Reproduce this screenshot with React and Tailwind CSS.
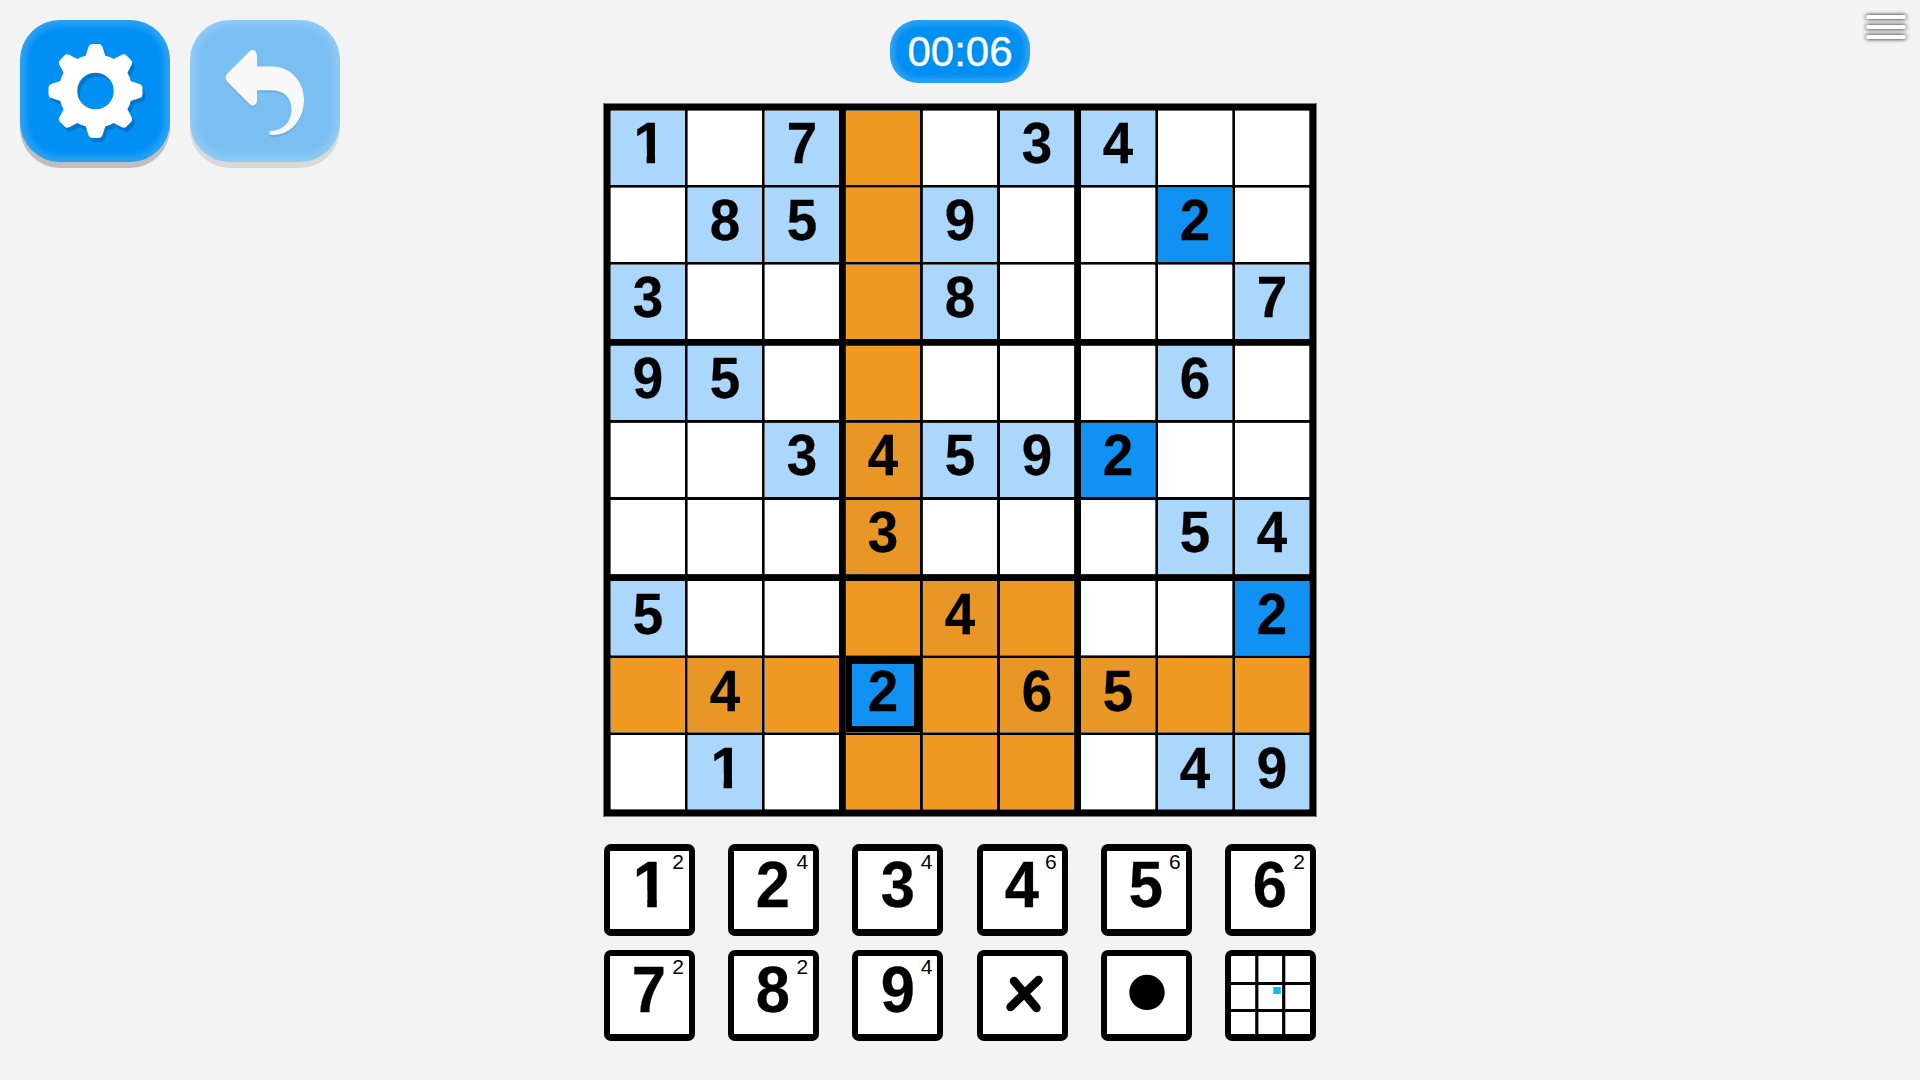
const ROWS = [
  '1.7..34..',
  '.85.9..2.',
  '3...8...7',
  '95.....6.',
  '..34592..',
  '...3...54',
  '5...4...2',
  '.4.2.65..',
  '.1.....49',
];

const SEL_ROW = 7;
const SEL_COL = 3;

// Hairlines beside each cell, one per column and per row.
const EDGE_X = [
  'shadow-[-1px_0_0_#666]',
  'shadow-[-1px_0_0_#666]',
  'shadow-[-1px_0_0_#666]',
  'shadow-[-1px_0_0_#222]',
  'shadow-[-1px_0_0_#222]',
  'shadow-[1px_0_0_#222]',
  'shadow-[1px_0_0_#555]',
  'shadow-[1px_0_0_#555]',
  'shadow-[1px_0_0_#555]',
];
const EDGE_Y = [
  'shadow-[0_-1px_0_#666]',
  'shadow-[0_-1px_0_#666]',
  'shadow-[0_-1px_0_#666]',
  'shadow-[0_-1px_0_#333]',
  'shadow-[0_-1px_0_#222]',
  'shadow-[0_1px_0_#222]',
  'shadow-[0_1px_0_#666]',
  'shadow-[0_1px_0_#666]',
  'shadow-[0_1px_0_#666]',
];

function cellColor(r, c, v) {
  if (v === '2') return 'bg-[#1192f2]';
  const lit =
    r === SEL_ROW ||
    c === SEL_COL ||
    (Math.floor(r / 3) === 2 && Math.floor(c / 3) === 1);
  if (lit) return v === '.' ? 'bg-[#f09a24]' : 'bg-[#e89626]';
  return v === '.' ? 'bg-white' : 'bg-[#acd7fd]';
}

// Slightly condensed bold digit; the "1" is trimmed to a footless stem.
function Digit({ value, className }) {
  const shape =
    value === '1'
      ? 'translate-x-[1.500px] [-webkit-text-stroke:0.6px_black] [clip-path:polygon(0_0,67.6%_0,67.6%_100%,41%_100%,41%_58%,0_58%)]'
      : 'scale-x-[0.96] [-webkit-text-stroke:0.3px_black]';
  return <span className={`inline-block font-bold ${shape} ${className}`}>{value}</span>;
}

function Cell({ r, c }) {
  const v = ROWS[r][c];
  const selected = r === SEL_ROW && c === SEL_COL;
  return (
    <div className={`size-[74px] ${EDGE_X[c]}`}>
      <div
        className={`flex size-full items-start justify-center ${EDGE_Y[r]} ${cellColor(r, c, v)} ${
          selected ? 'border-[6px] border-black' : ''
        }`}
      >
        {v !== '.' && (
          <Digit
            value={v}
            className={`text-[57px] ${r > 5 ? 'leading-[67px]' : 'leading-[65px]'} ${
              selected ? '-mt-[6px]' : ''
            }`}
          />
        )}
      </div>
    </div>
  );
}

function Board() {
  const idx = [0, 1, 2];
  return (
    <div className="grid w-[714px] grid-cols-3 gap-[7px] border border-[#777] bg-black p-[7px]">
      {idx.map((br) =>
        idx.map((bc) => (
          <div key={`${br}${bc}`} className="grid grid-cols-3 gap-[3px]">
            {idx.map((r) => idx.map((c) => <Cell key={`${r}${c}`} r={br * 3 + r} c={bc * 3 + c} />))}
          </div>
        )),
      )}
    </div>
  );
}

function Key({ label, count, tall, children }) {
  return (
    <button
      className={`relative flex w-[91px] items-start justify-center rounded-[7px] border-[6px] border-b-[7px] border-black bg-white ${
        tall ? 'h-[92px] border-t-[7px]' : 'h-[91px]'
      }`}
    >
      {label && <Digit value={label} className="-ml-[1px] text-[64px] leading-[68px]" />}
      {count && <span className="absolute top-0 right-[5px] text-[21px] leading-[22px]">{count}</span>}
      {children}
    </button>
  );
}

const KEYS = [
  ['1', '2'], ['2', '4'], ['3', '4'], ['4', '6'], ['5', '6'], ['6', '2'],
  ['7', '2'], ['8', '2'], ['9', '4'],
];

const TEETH = [0, 45, 90, 135, 180, 225, 270, 315];

function GearShape({ color }) {
  return (
    <g fill={color} stroke={color}>
      <circle r="27.5" fill="none" strokeWidth="18.5" />
      {TEETH.map((a) => (
        <path
          key={a}
          transform={`rotate(${a})`}
          d="M-9.5 -33 L-6 -44 Q-5.2 -46 -3.5 -46 L3.5 -46 Q5.2 -46 6 -44 L9.5 -33 Z"
          strokeWidth="2"
          strokeLinejoin="round"
        />
      ))}
    </g>
  );
}

const ARROW =
  'M26.5 53.5 L49 31 Q51.5 28.5 54.5 31.5 Q56 33 56 36 L56 46.5 L71 46.5 C90 46.5 103 62 103 80 C103 99 90 115 72 115 L70 115 Q68 114.500 68 113 Q68 111 70 111 C82 110.500 90.500 102 90.500 90 C90.500 78 83 70.300 70 70.300 L56 70.300 L56 80 Q56 84 53 85.500 Q51 86.500 49 84.500 L26.5 62 Q23 58 26.5 53.5 Z';

export default function App() {
  return (
    <div className="flex h-[1080px] w-[1920px] justify-between overflow-hidden bg-[#f3f3f3] font-['Liberation_Sans',Arial,sans-serif] text-black">
      <div className="flex w-[603px] gap-5 pt-5 pl-5">
        <button className="h-[142px] w-[150px] rounded-[40px] bg-[#008ff3] shadow-[0_6px_0_#bfbfbf,inset_0_0_6px_6px_rgba(255,255,255,0.17)]">
          <svg className="size-full" viewBox="0 0 150 142">
            <g transform="translate(78 75)"><GearShape color="#0077cb" /></g>
            <g transform="translate(75.500 71)"><GearShape color="#fff" /></g>
          </svg>
        </button>
        <button className="h-[142px] w-[150px] rounded-[40px] bg-[#7abff2] shadow-[0_6px_0_#d9d9d9,inset_0_0_6px_6px_rgba(255,255,255,0.17)]">
          <svg className="size-full" viewBox="0 0 150 142">
            <path d={ARROW} transform="translate(11 2)" fill="#6aaedf" />
            <path d={ARROW} transform="translate(11 0)" fill="#f8f8f8" />
          </svg>
        </button>
      </div>

      <main className="flex w-[714px] flex-col items-center pt-5">
        <div className="flex h-[63px] w-[140px] items-center justify-center rounded-[28px] bg-[#008ff3] text-[42px] leading-none text-white shadow-[inset_0_0_5px_5px_rgba(255,255,255,0.17)]">
          <span className="[-webkit-text-stroke:0.4px_white]">00:06</span>
        </div>
        <div className="mt-5">
          <Board />
        </div>
        <div className="mt-[27px] grid w-[712px] grid-cols-[repeat(6,91px)] justify-between gap-y-[14px]">
          {KEYS.map(([label, count], i) => (
            <Key key={label} label={label} count={count} tall={i < 6} />
          ))}
          <Key>
            <svg className="h-[78px] w-[79px]" viewBox="0 0 79 78">
              <path d="M31 25 L53.500 52 M55.500 24 L27.500 51" stroke="#000" strokeWidth="8.500" strokeLinecap="round" />
            </svg>
          </Key>
          <Key>
            <svg className="h-[78px] w-[79px]" viewBox="0 0 79 78">
              <circle cx="40" cy="36.400" r="17.700" />
            </svg>
          </Key>
          <Key>
            <svg className="h-[78px] w-[79px]" viewBox="0 0 79 78">
              <path d="M25.800 0V78M52.700 0V78M0 27.500H79M0 54.500H79" stroke="#000" strokeWidth="3.200" />
              <rect x="42.300" y="31" width="7.500" height="7" fill="#00bfff" />
            </svg>
          </Key>
        </div>
      </main>

      <div className="flex w-[603px] justify-end pt-[15px] pr-[14px]">
        <div className="flex h-6 w-10 flex-col justify-between">
          <div className="h-1 rounded-full bg-white shadow-[0_0_4px_#000]" />
          <div className="h-1 rounded-full bg-white shadow-[0_0_4px_#000]" />
          <div className="h-1 rounded-full bg-white shadow-[0_0_4px_#000]" />
        </div>
      </div>
    </div>
  );
}
